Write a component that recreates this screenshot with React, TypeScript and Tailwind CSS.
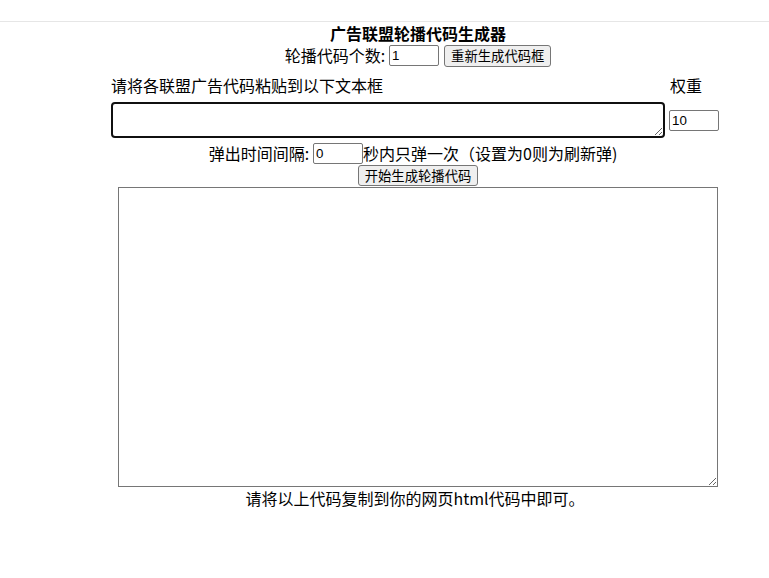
import { useState } from 'react';

const cjk = "font-['Noto_Sans_CJK_SC',sans-serif]";
const field =
  "h-[21px] w-[50px] rounded-[2px] border border-[#767676] bg-white px-[2px] text-[13.33px] leading-[17px] text-black outline-none font-['Liberation_Sans','Noto_Sans_CJK_SC',sans-serif]";
const btn =
  "rounded-[3px] border border-[#767676] bg-[#efefef] px-[6px] text-[13.33px] leading-[17px] text-black " + cjk;

export default function App() {
  const [count, setCount] = useState('1');
  const [weight, setWeight] = useState('10');
  const [interval, setInterval] = useState('0');
  const [adCode, setAdCode] = useState('');
  const [output, setOutput] = useState('');

  return (
    <div className={"min-h-screen bg-white text-[16px] text-black " + cjk}>
      <div className="h-[22px] border-b border-[#e6e6e6]" />

      <div className="ml-[109px] w-[618px]">
        <h1 className="text-center text-[16px] font-bold leading-[22px]">广告联盟轮播代码生成器</h1>

        <div className="flex h-[23px] items-center justify-center">
          <span className="leading-[23px]">轮播代码个数:</span>
          <input
            value={count}
            onChange={e => setCount(e.target.value)}
            className={field + ' ml-[4px]'}
          />
          <button className={btn + ' ml-[5px] h-[22px]'}>重新生成代码框</button>
        </div>

        <div className="mt-[6px] flex h-[24px] leading-[24px]">
          <div className="w-[558px] pl-[2px]">请将各联盟广告代码粘贴到以下文本框</div>
          <div className="pl-[3px]">权重</div>
        </div>

        <div className="mt-[5px] flex h-[36px] items-center">
          <textarea
            value={adCode}
            onChange={e => setAdCode(e.target.value)}
            className="ml-[2px] h-[36px] w-[554px] rounded-[4px] border-2 border-[#101010] bg-white outline-none"
          />
          <input
            value={weight}
            onChange={e => setWeight(e.target.value)}
            className={field + ' ml-[4px]'}
          />
        </div>

        <div className="mt-[4px] flex h-[22px] items-center justify-center pr-[10px]">
          <span className="leading-[22px]">弹出时间间隔:</span>
          <input
            value={interval}
            onChange={e => setInterval(e.target.value)}
            className={field + ' ml-[4px] w-[49px]'}
          />
          <span className="leading-[22px]">秒内只弹一次（设置为0则为刷新弹)</span>
        </div>

        <div className="mt-[1px] flex justify-center">
          <button className={btn + ' h-[21px]'}>开始生成轮播代码</button>
        </div>

        <textarea
          value={output}
          onChange={e => setOutput(e.target.value)}
          className="mx-auto mt-[1px] block h-[300px] w-[600px] border border-[#767676] bg-white outline-none"
        />

        <div className="flex justify-center pr-[6px] leading-[23px]">
          请将以上代码复制到你的网页html代码中即可。
        </div>
      </div>
    </div>
  );
}
